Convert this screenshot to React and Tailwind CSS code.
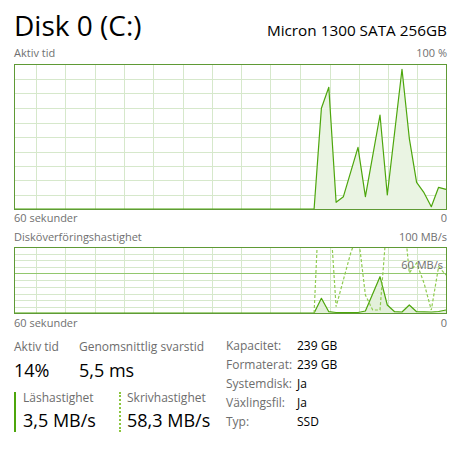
import React from "react";

const GREEN = "#4da60c";
const BORDER = "#5f9a35";
const GRID = "#d6e8cb";

const vLines = [22, 51, 81, 110, 139, 169, 198, 227, 256, 286, 316, 345, 374, 403];

const activePts =
  "0,145 300.1,145 307.4,44.3 314.8,23.3 322.1,138.3 329.4,132.7 344,83.3 351.4,132.7 366,51 373.3,131 388,5.3 395.3,74.3 402.6,118.3 410,128.7 417.3,142.7 424.6,123.3 432,125.3";

const readPts =
  "0,66 300.1,66 307.4,51.3 314.8,64.7 322.1,65.5 344,65.5 351.4,64 366,29.7 373.3,58 380.6,64.7 388,65 395.3,58 402.6,64.7 417.3,65 424.6,64.5 432,63";

const writePts =
  "300.1,66 307.4,-95 314.8,-52 322.1,59.7 336.7,6 344,-14 351.4,48 358.7,63 366,63 373.3,-30 388,-50 395.3,26 402.6,16 410,36 417.3,63 424.6,19.7 432,28";

function ActiveChart() {
  const hLines = [15, 29, 44, 59, 73, 88, 102, 116, 131];
  return (
    <svg width="433" height="146" viewBox="0 0 433 146" className="block">
      {vLines.map((x) => (
        <line key={x} x1={x + 0.5} y1="0" x2={x + 0.5} y2="146" stroke={GRID} />
      ))}
      {hLines.map((y) => (
        <line key={y} x1="0" y1={y + 0.5} x2="433" y2={y + 0.5} stroke={GRID} />
      ))}
      <polygon points={activePts + " 432,145"} fill="#eaf4e3" />
      <polyline points={activePts} fill="none" stroke={GREEN} strokeWidth="1.2" strokeLinejoin="round" />
      <rect x="0.5" y="0.5" width="432" height="145" fill="none" stroke={BORDER} />
    </svg>
  );
}

function TransferChart() {
  const hLines = [7, 13, 20, 33, 40, 47, 53, 60];
  return (
    <svg width="433" height="67" viewBox="0 0 433 67" className="block">
      <defs>
        <clipPath id="c2">
          <rect x="0" y="0" width="433" height="67" />
        </clipPath>
      </defs>
      {vLines.map((x) => (
        <line key={x} x1={x + 0.5} y1="0" x2={x + 0.5} y2="67" stroke={GRID} />
      ))}
      {hLines.map((y) => (
        <line key={y} x1="0" y1={y + 0.5} x2="433" y2={y + 0.5} stroke={GRID} />
      ))}
      <line x1="0" y1="26.5" x2="433" y2="26.5" stroke="#92c76e" />
      <g clipPath="url(#c2)">
        <polygon points={readPts + " 432,66"} fill="#e3f0da" />
        <polyline points={readPts} fill="none" stroke={GREEN} strokeWidth="1.2" strokeLinejoin="round" />
        <polyline points={writePts} fill="none" stroke="#8fcb4f" strokeWidth="1.2" strokeDasharray="3 2" />
      </g>
      <rect x="0.5" y="0.5" width="432" height="66" fill="none" stroke={BORDER} />
    </svg>
  );
}

function AxisRow({ left, right, className }) {
  return (
    <div className={"flex w-[433px] justify-between text-[11px] leading-[14px] text-[#707070] " + className}>
      <span>{left}</span>
      <span>{right}</span>
    </div>
  );
}

const info = [
  ["Kapacitet:", "239 GB"],
  ["Formaterat:", "239 GB"],
  ["Systemdisk:", "Ja"],
  ["Växlingsfil:", "Ja"],
  ["Typ:", "SSD"],
];

export default function App() {
  return (
    <div
      className="w-[458px] h-[449px] bg-white pl-[14px] text-[#1a1a1a] overflow-hidden"
      style={{ fontFamily: '"Segoe UI", "Open Sans", "Noto Sans", sans-serif' }}
    >
      <div className="flex w-[433px] items-baseline justify-between pt-[10px]">
        <span className="text-[28px] leading-[30px] text-black">Disk 0 (C:)</span>
        <span className="text-[15.3px] leading-[20px] text-black">Micron 1300 SATA 256GB</span>
      </div>

      <AxisRow left="Aktiv tid" right="100 %" className="mt-[6px]" />
      <div className="mt-[4px]">
        <ActiveChart />
      </div>
      <AxisRow left="60 sekunder" right="0" className="mt-px" />

      <AxisRow left="Disköverföringshastighet" right="100 MB/s" className="mt-[5px]" />
      <div className="relative mt-[3px] w-[433px]">
        <TransferChart />
        <span className="absolute right-[4px] top-[11px] text-[11px] leading-[14px] text-[#707070]">60 MB/s</span>
      </div>
      <AxisRow left="60 sekunder" right="0" className="mt-[2px]" />

      <div className="mt-[7px] flex">
        <div className="w-[212px] pt-[2px]">
          <div className="flex text-[12px] leading-[16px] text-[#6d6d6d]">
            <span className="w-[65px]">Aktiv tid</span>
            <span>Genomsnittlig svarstid</span>
          </div>
          <div className="mt-[4px] flex text-[18px] leading-[22px] text-black">
            <span className="w-[65px]">14%</span>
            <span>5,5 ms</span>
          </div>
          <div className="mt-[11px] flex">
            <div className="w-[105px] border-l-2 border-[#4da60c] pl-[7px] pb-px">
              <div className="text-[12px] leading-[12px] text-[#6d6d6d]">Läshastighet</div>
              <div className="mt-[5px] text-[18px] leading-[22px] text-black">3,5 MB/s</div>
            </div>
            <div className="border-l-2 border-dotted border-[#8cc63f] pl-[6px] pb-px">
              <div className="text-[12px] leading-[12px] text-[#6d6d6d]">Skrivhastighet</div>
              <div className="mt-[5px] text-[18px] leading-[22px] text-black whitespace-nowrap">58,3 MB/s</div>
            </div>
          </div>
        </div>
        <div className="grid grid-cols-[71px_auto] text-[12px] leading-[18.3px]">
          {info.map(([k, v]) => (
            <React.Fragment key={k}>
              <span className="text-[#6d6d6d]">{k}</span>
              <span className="text-black">{v}</span>
            </React.Fragment>
          ))}
        </div>
      </div>
    </div>
  );
}
